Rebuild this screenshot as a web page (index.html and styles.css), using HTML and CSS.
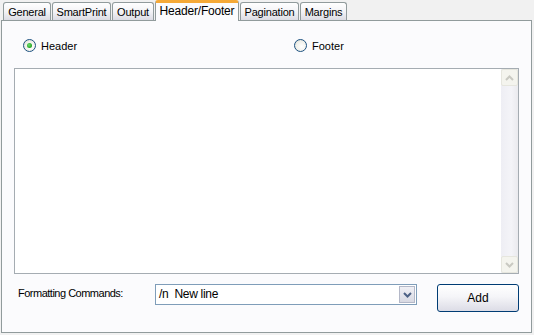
FILE: index.html
```html
<!DOCTYPE html>
<html lang="en">
<head>
    <meta charset="UTF-8">
    <title>Header/Footer</title>
    <link rel="stylesheet" href="styles.css">
</head>
<body>
    <div class="tabs">
        <div class="tab tab-general">General</div>
        <div class="tab tab-smart">SmartPrint</div>
        <div class="tab tab-output">Output</div>
        <div class="tab tab-header active">Header/Footer</div>
        <div class="tab tab-pages">Pagination</div>
        <div class="tab tab-margins">Margins</div>
    </div>
    <div class="panel">
        <div class="radio-row">
            <label class="radio-group first">
                <span class="radio checked"></span>
                <span>Header</span>
            </label>
            <label class="radio-group">
                <span class="radio"></span>
                <span>Footer</span>
            </label>
        </div>

        <div class="editbox">
            <div class="edit-area"></div>
            <div class="scrollbar">
                <div class="sb-btn">
                    <svg width="9" height="6" viewBox="0 0 9 6"><path d="M1 5 L4.5 1.5 L8 5" fill="none" stroke="#c9c9c2" stroke-width="2"/></svg>
                </div>
                <div class="sb-track"></div>
                <div class="sb-btn">
                    <svg width="9" height="6" viewBox="0 0 9 6"><path d="M1 1 L4.5 4.5 L8 1" fill="none" stroke="#c9c9c2" stroke-width="2"/></svg>
                </div>
            </div>
        </div>

        <div class="bottom-row">
            <span class="cmd-label">Formatting Commands:</span>
            <div class="combo">
                <span class="combo-text">/n&nbsp; New line</span>
                <span class="combo-btn">
                    <svg width="9" height="6" viewBox="0 0 9 6"><path d="M1 1 L4.5 4.5 L8 1" fill="none" stroke="#4d6185" stroke-width="2"/></svg>
                </span>
            </div>
            <button class="add-btn">Add</button>
        </div>
    </div>
</body>
</html>
```

FILE: styles.css
```css
body {
    margin: 0;
    padding: 0;
    width: 534px;
    height: 335px;
    background-color: #f1f1f1;
    font-family: "Liberation Sans", Arial, sans-serif;
    font-size: 11px;
    color: #000;
    overflow: hidden;
}

/* tab strip */
.tabs {
    display: flex;
    align-items: flex-end;
    height: 20px;
    padding-left: 3px;
    position: relative;
    z-index: 2;
}

.tab {
    height: 18px;
    line-height: 18px;
    margin-right: 1px;
    box-sizing: border-box;
    border: 1px solid #919b9c;
    border-bottom: none;
    border-radius: 3px 3px 0 0;
    background: linear-gradient(to bottom, #ffffff 0%, #f3f3f6 50%, #dcdce4 100%);
    text-align: center;
    letter-spacing: -0.2px;
    white-space: nowrap;
}

.tab-general { width: 48px; }
.tab-smart { width: 59px; }
.tab-output { width: 42px; }
.tab-header { width: 84px; }
.tab-pages { width: 59px; }
.tab-margins { width: 47px; }

.tab.active {
    height: 21px;
    margin-bottom: -1px;
    line-height: 17px;
    border-top: 3px solid #f5a937;
    background: #fbfbfd;
    font-size: 12px;
}

/* page */
.panel {
    margin: 0 2px 0 1px;
    height: 313px;
    box-sizing: border-box;
    border: 1px solid #919b9c;
    background-color: #fbfbfd;
}

.radio-row {
    display: flex;
    align-items: center;
    height: 13px;
    margin-top: 18px;
    padding-left: 21px;
}

.radio-group {
    display: flex;
    align-items: center;
    gap: 5px;
}

.radio-group.first {
    width: 271px;
}

.radio {
    width: 13px;
    height: 13px;
    box-sizing: border-box;
    border: 1px solid #1c5180;
    border-radius: 50%;
    background: radial-gradient(circle at 60% 60%, #ffffff 0%, #f0f0ea 55%, #d3d2c8 100%);
    position: relative;
}

.radio.checked::after {
    content: "";
    position: absolute;
    left: 3px;
    top: 3px;
    width: 5px;
    height: 5px;
    border-radius: 50%;
    background: radial-gradient(circle at 40% 40%, #6fe06f 0%, #21a121 70%, #1a8a1a 100%);
}

/* multi line edit */
.editbox {
    display: flex;
    margin: 16px 0 0 12px;
    width: 505px;
    height: 206px;
    box-sizing: border-box;
    border: 1px solid #a5acb2;
    background: #fff;
}

.edit-area {
    flex: 1;
}

.scrollbar {
    width: 17px;
    display: flex;
    flex-direction: column;
    background: linear-gradient(to right, #eeeef4 0%, #f4f4f8 60%, #eaeaee 100%);
}

.sb-btn {
    height: 17px;
    box-sizing: border-box;
    border: 1px solid #e6e6de;
    border-radius: 2px;
    background: #f4f4ee;
    display: flex;
    align-items: center;
    justify-content: center;
}

.sb-track {
    flex: 1;
}

/* bottom controls */
.bottom-row {
    display: flex;
    align-items: flex-start;
    margin-top: 10px;
    padding-left: 16px;
}

.cmd-label {
    width: 137px;
    margin-top: 3px;
    letter-spacing: -0.5px;
}

.combo {
    display: flex;
    width: 262px;
    height: 21px;
    box-sizing: border-box;
    border: 1px solid #7f9db9;
    background: #fff;
}

.combo-text {
    flex: 1;
    line-height: 19px;
    padding-left: 3px;
    font-size: 12px;
    letter-spacing: -0.3px;
}

.combo-btn {
    width: 16px;
    margin: 1px;
    box-sizing: border-box;
    border: 1px solid #b4b8c8;
    background: linear-gradient(to bottom, #f0f0f5 0%, #d8d9e3 100%);
    display: flex;
    align-items: center;
    justify-content: center;
}

.add-btn {
    margin-left: 20px;
    width: 82px;
    height: 28px;
    border: 1px solid #003c74;
    border-radius: 3px;
    background: linear-gradient(to bottom, #ffffff 0%, #f5f5f8 45%, #dcdce6 100%);
    font-family: "Liberation Sans", Arial, sans-serif;
    font-size: 12px;
    color: #000;
    padding: 0;
}
```
